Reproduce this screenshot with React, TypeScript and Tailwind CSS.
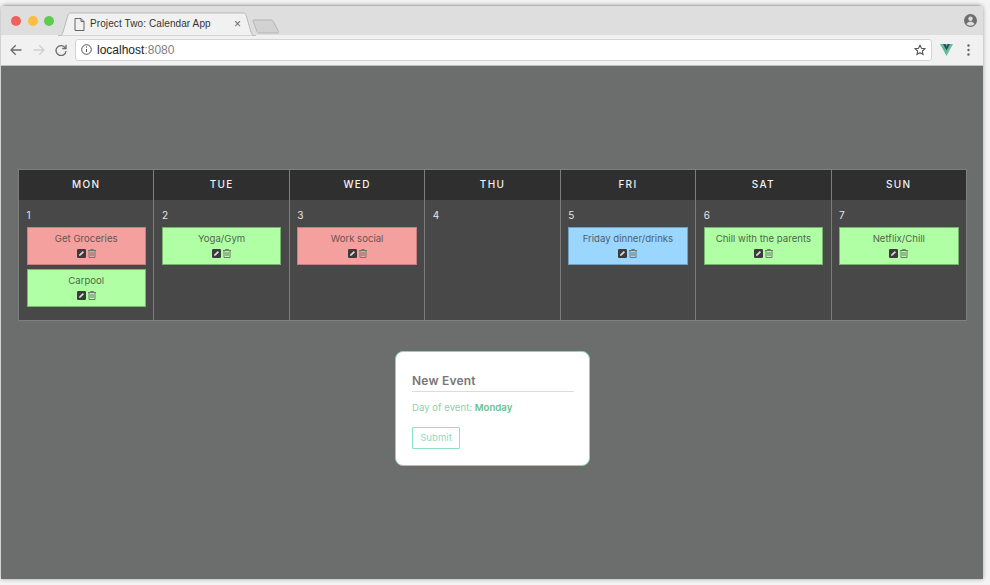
import React from "react";

type Ev = { title: string; tone: "red" | "green" | "blue" };
const days: { name: string; num: number; events: Ev[] }[] = [
  { name: "MON", num: 1, events: [{ title: "Get Groceries", tone: "red" }, { title: "Carpool", tone: "green" }] },
  { name: "TUE", num: 2, events: [{ title: "Yoga/Gym", tone: "green" }] },
  { name: "WED", num: 3, events: [{ title: "Work social", tone: "red" }] },
  { name: "THU", num: 4, events: [] },
  { name: "FRI", num: 5, events: [{ title: "Friday dinner/drinks", tone: "blue" }] },
  { name: "SAT", num: 6, events: [{ title: "Chill with the parents", tone: "green" }] },
  { name: "SUN", num: 7, events: [{ title: "Netflix/Chill", tone: "green" }] },
];

const toneCls = {
  red: "bg-[#f4a09e] border-[#c67f7e] text-[#6a5352]",
  green: "bg-[#b0ffa4] border-[#78b470] text-[#4f664b]",
  blue: "bg-[#9bd6ff] border-[#6fa0c4] text-[#4a5f70]",
};

function EditIcon() {
  return (
    <svg width="9" height="9" viewBox="0 0 9 9">
      <rect width="9" height="9" rx="1.2" fill="#3b3b3b" />
      <path d="M2 7l.5-1.800L5.800 2 7 3.200 3.700 6.500z" fill="#ddd" />
    </svg>
  );
}

function TrashIcon() {
  return (
    <svg width="8" height="9" viewBox="0 0 8 9" fill="none" stroke="#6f7a6d" strokeWidth="1">
      <path d="M0 1.500h8M2.500 1.500V.5h3v1M1 1.500v7h6v-7M3 3v4M5 3v4" />
    </svg>
  );
}

function EventCard({ ev }: { ev: Ev }) {
  return (
    <div className={`h-[38px] border flex flex-col items-center pt-[5px] ${toneCls[ev.tone]}`}>
      <div className="text-[9.6px] leading-[12px] whitespace-nowrap">{ev.title}</div>
      <div className="flex items-center gap-[2px] mt-[4px]">
        <EditIcon />
        <TrashIcon />
      </div>
    </div>
  );
}

function Dot({ cls }: { cls: string }) {
  return <div className={`w-[10px] h-[10px] rounded-full ${cls}`} />;
}

export default function App() {
  return (
    <div className="w-[990px] h-[585px] overflow-hidden bg-[#f4f4f4] pl-px pt-[5px] font-['Inter',sans-serif]">
      <div className="w-[982px] h-[574px] flex flex-col rounded-t-[5px] overflow-hidden shadow-[0_0_4px_rgba(0,0,0,0.35)]">
        {/* title bar */}
        <div className="relative h-[30px] bg-[#dedede] border-t border-[#b5b5b5] flex items-center shrink-0">
          <div className="flex gap-[6.500px] pl-[10px] mt-[1px]">
            <Dot cls="bg-[#f2605c]" />
            <Dot cls="bg-[#fbbe41]" />
            <Dot cls="bg-[#5fcb50]" />
          </div>
          <svg className="absolute left-[57px] top-[6px]" width="200" height="24" viewBox="0 0 200 24">
            <path d="M0 24c3 0 4-1 5-4L10 3c.5-1.500 1.500-2 3-2h172c1.500 0 2.500.5 3 2l5 17c1 3 2 4 5 4z" fill="#f1f1f1" stroke="#b9b9b9" strokeWidth="1" />
          </svg>
          <svg className="absolute left-[251px] top-[13px]" width="28" height="15" viewBox="0 0 28 15">
            <path d="M2 1h17c1 0 1.500.3 2 1l5.500 10.500c.3 1-.2 1.500-1 1.500H7c-1 0-1.500-.5-2-1.500L1 2c-.3-.7.2-1 1-1z" fill="#d2d2d2" stroke="#b5b5b5" />
          </svg>
          <svg className="absolute left-[73px] top-[12px]" width="11" height="13" viewBox="0 0 11 13" fill="none" stroke="#666" strokeWidth="1">
            <path d="M1 .5h6l3 3v9H1zM7 .5v3h3" />
          </svg>
          <span className="absolute left-[89px] top-[11px] text-[10px] leading-[14px] text-[#333] tracking-[0.1px] font-['Liberation_Sans',sans-serif]">Project Two: Calendar App</span>
          <span className="absolute left-[233px] top-[11px] text-[12px] leading-[14px] text-[#666] font-['Liberation_Sans',sans-serif]">×</span>
          <svg className="absolute right-[6px] top-[8px]" width="13" height="13" viewBox="0 0 13 13">
            <circle cx="6.500" cy="6.500" r="6.500" fill="#6e6e6e" />
            <circle cx="6.500" cy="4.800" r="2.200" fill="#dedede" />
            <path d="M2.500 10c.8-1.700 2.400-2.300 4-2.300s3.200.6 4 2.300c-1 1.200-2.400 1.700-4 1.700s-3-.5-4-1.700z" fill="#dedede" />
          </svg>
        </div>
        {/* toolbar */}
        <div className="h-[31px] bg-[#f1f1f1] border-b border-[#bdbdbd] flex items-center shrink-0 pb-[1px]">
          <svg className="ml-[9px]" width="12" height="12" viewBox="0 0 12 12" fill="none" stroke="#6a6a6a" strokeWidth="1.300">
            <path d="M11.500 6H1M5.700 1.300L1 6l4.700 4.700" />
          </svg>
          <svg className="ml-[11px]" width="12" height="12" viewBox="0 0 12 12" fill="none" stroke="#cfcfcf" strokeWidth="1.300">
            <path d="M.5 6H11M6.300 1.300L11 6l-4.700 4.700" />
          </svg>
          <svg className="ml-[10px]" width="12" height="12" viewBox="0 0 12 12" fill="none" stroke="#6a6a6a" strokeWidth="1.300">
            <path d="M10.300 4A5 5 0 1 0 11 7" />
            <path d="M11 .8V4.500H7.300" />
          </svg>
          <div className="ml-[8px] w-[857px] h-[22px] bg-white border border-[#d4d4d4] rounded-[3px] flex items-center pl-[5px] pr-[5px]">
            <svg width="11" height="11" viewBox="0 0 11 11" fill="none" stroke="#555" strokeWidth="1">
              <circle cx="5.500" cy="5.500" r="4.800" />
              <path d="M5.500 5v3M5.500 2.500v1.200" />
            </svg>
            <span className="ml-[5px] mt-[1px] text-[12px] leading-none text-[#222] font-['Liberation_Sans',sans-serif]">
              localhost<span className="text-[#808080]">:8080</span>
            </span>
            <svg className="ml-auto" width="12" height="12" viewBox="0 0 24 24" fill="none" stroke="#555" strokeWidth="2.200">
              <path d="M12 2.500l2.900 6.200 6.800.8-5 4.600 1.300 6.700-6-3.400-6 3.400 1.300-6.700-5-4.600 6.800-.8z" />
            </svg>
          </div>
          <svg className="ml-[8px]" width="13" height="12" viewBox="0 0 13 12">
            <path d="M0 0h13L6.500 12z" fill="#5fc09a" />
            <path d="M3 0h2.300L6.500 2.500 7.700 0H10L6.500 6.500z" fill="#35495e" />
          </svg>
          <svg className="ml-[14px]" width="3" height="12" viewBox="0 0 3 12" fill="#666">
            <circle cx="1.500" cy="1.500" r="1.200" />
            <circle cx="1.500" cy="6" r="1.200" />
            <circle cx="1.500" cy="10.500" r="1.200" />
          </svg>
        </div>
        {/* page */}
        <div className="flex-1 bg-[#6c6e6e] flex flex-col pl-[17px] pt-[103px]">
          <div className="w-[949px] grid grid-cols-7 border-r border-b border-[#7f817f]">
            {days.map((d) => (
              <div key={d.name} className="flex flex-col border-l border-t border-[#7b7d7b] min-w-0">
                <div className="h-[30px] pb-[2px] bg-[#2f2f2f] text-[#f2f2f2] text-[10px] font-medium tracking-[1.300px] flex items-center justify-center">
                  {d.name}
                </div>
                <div className="h-[120px] bg-[#484848] px-[7.500px] pt-[9px] flex flex-col">
                  <div className="text-[10px] leading-[12px] text-[#e6e6e6] mb-[6px]">{d.num}</div>
                  <div className="flex flex-col gap-[4px]">
                    {d.events.map((ev) => (
                      <EventCard key={ev.title} ev={ev} />
                    ))}
                  </div>
                </div>
              </div>
            ))}
          </div>
          <div className="mt-[30px] ml-[377px] w-[195px] h-[115px] bg-white border border-[#8fd4b2] rounded-[8px] pl-[16px] pr-[15px] pt-[22px]">
            <div className="h-[18px] border-b border-[#dcdcdc] text-[12px] leading-[14px] font-semibold text-[#777] tracking-[0.2px]">New Event</div>
            <div className="mt-[10px] text-[9.6px] leading-[12px] text-[#8fd0ab]">
              Day of event: <span className="font-semibold text-[#6cc08f]">Monday</span>
            </div>
            <div className="mt-[13px] w-[48px] h-[22px] border border-[#8ee0c8] rounded-[1px] text-[9.6px] text-[#8fdcc5] flex items-center justify-center">
              Submit
            </div>
          </div>
        </div>
      </div>
    </div>
  );
}
